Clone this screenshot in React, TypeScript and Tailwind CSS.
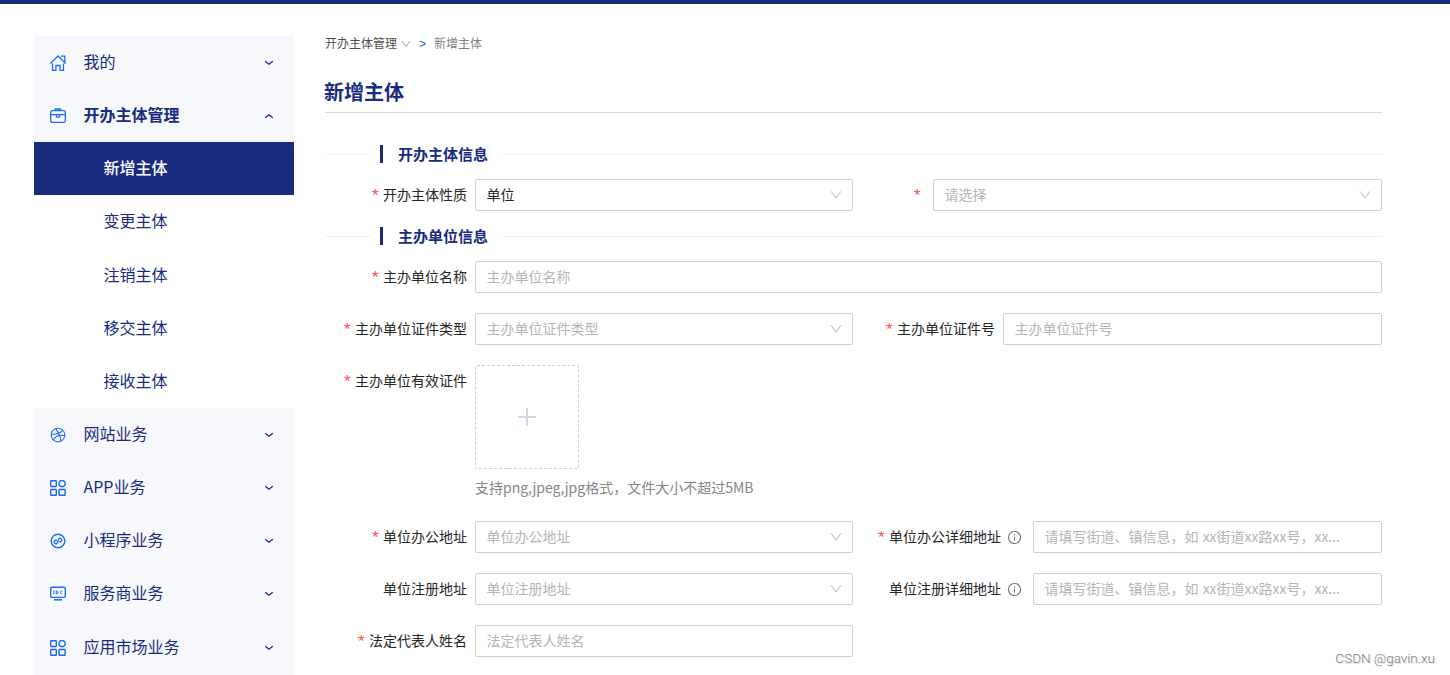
import { useState } from "react";
import type { ReactNode } from "react";
import { AiOutlineDribbble, AiOutlineInfoCircle } from "react-icons/ai";

const IconHome = () => (
  <svg width="16" height="16" viewBox="0 0 16 16" fill="none" stroke="currentColor" strokeWidth="1.3">
    <path d="M0.4 8.6L8 1l7.6 7.6" />
    <path d="M10.8 1.2h4v6.2" />
    <path d="M2.5 8.4v7h3.4v-4.9h4.2v4.9h3.4v-7" />
  </svg>
);

const IconBriefcase = () => (
  <svg width="16" height="16" viewBox="0 0 16 16" fill="none" stroke="currentColor" strokeWidth="1.3">
    <rect x="0.7" y="2.6" width="14.6" height="11.8" rx="1.6" />
    <path d="M5.4 2.6V0.9h5.2v1.7" strokeWidth="1.5" />
    <path d="M0.6 6.7h14.8M6.3 6.9v.8a1.7 1.7 0 0 0 3.4 0v-.8" />
  </svg>
);

const IconGrid = () => (
  <svg width="16" height="16" viewBox="0 0 16 16" fill="none" stroke="currentColor" strokeWidth="1.4">
    <rect x="0.7" y="0.7" width="5.6" height="5.8" rx="0.4" />
    <circle cx="12.1" cy="3.6" r="3.1" />
    <rect x="0.7" y="9.5" width="5.6" height="5.8" rx="0.4" />
    <rect x="9.1" y="9.5" width="6" height="5.8" rx="0.4" />
  </svg>
);

const IconMiniProgram = () => (
  <svg width="16" height="16" viewBox="0 0 16 16" fill="none" stroke="currentColor" strokeWidth="1.4">
    <circle cx="8" cy="8" r="6.8" />
    <path
      d="M6.3 7.9A1.7 1.7 0 1 0 8 9.7V6.3a1.7 1.7 0 1 1 1.7 1.8"
      transform="rotate(18 8 8)"
      strokeLinecap="round"
    />
  </svg>
);

const IconIdc = () => (
  <svg width="16" height="16" viewBox="0 0 16 16" fill="none" stroke="currentColor" strokeWidth="1.4">
    <rect x="0.7" y="1.2" width="14.6" height="10.2" rx="1.4" />
    <path d="M4 13.8h8" strokeWidth="1.5" />
    <path d="M3.9 4.5v3.7M6.2 5v2.8h.7c1.6 0 1.6-2.8 0-2.8zM12.3 5.2c-2.5-.9-2.5 3.3 0 2.5" strokeWidth="1" />
  </svg>
);

const MENU: { label: string; icon: ReactNode; children?: string[] }[] = [
  { label: "我的", icon: <IconHome /> },
  {
    label: "开办主体管理",
    icon: <IconBriefcase />,
    children: ["新增主体", "变更主体", "注销主体", "移交主体", "接收主体"],
  },
  { label: "网站业务", icon: <AiOutlineDribbble size={18} className="-m-px" /> },
  { label: "APP业务", icon: <IconGrid /> },
  { label: "小程序业务", icon: <IconMiniProgram /> },
  { label: "服务商业务", icon: <IconIdc /> },
  { label: "应用市场业务", icon: <IconGrid /> },
];

const DETAIL_HINT = "请填写街道、镇信息，如 xx街道xx路xx号，xx...";

function MenuArrow({ open }: { open: boolean }) {
  return (
    <svg
      width="10"
      height="6"
      viewBox="0 0 10 6"
      fill="none"
      stroke="currentColor"
      strokeWidth="1.4"
      className={open ? "rotate-180" : ""}
    >
      <path d="M1.2 1.3L5 4.2l3.8-2.9" />
    </svg>
  );
}

function ChevronDown({ className }: { className: string }) {
  return (
    <svg viewBox="0 0 12 12" fill="none" stroke="currentColor" className={className}>
      <path d="M1.1 2.4L6 9l4.9-6.6" />
    </svg>
  );
}

function Sidebar() {
  const [active, setActive] = useState("新增主体");

  return (
    <nav className="w-[260px] shrink-0 bg-[#f7f8fc] pb-4 text-base text-[#182b7d]">
      {MENU.map((item) => (
        <div key={item.label}>
          <button
            type="button"
            className={`flex h-[53.15px] w-full items-center pr-5 pl-4 ${item.children ? "font-bold" : ""}`}
          >
            <span className="mt-px mr-[17.5px] text-[#1f6bf0]">{item.icon}</span>
            <span className="pb-[3px]">{item.label}</span>
            <span className="mt-px ml-auto">
              <MenuArrow open={!!item.children} />
            </span>
          </button>
          {item.children?.map((child) => (
            <button
              key={child}
              type="button"
              onClick={() => setActive(child)}
              className={`flex h-[53.15px] w-full items-center pb-[3px] pl-[69.5px] ${
                active === child ? "bg-[#182b7d] font-medium text-white" : "bg-white"
              }`}
            >
              {child}
            </button>
          ))}
        </div>
      ))}
    </nav>
  );
}

function SectionTitle({ children }: { children: ReactNode }) {
  return (
    <div className="flex h-[18px] items-center text-[15px] font-bold text-[#182b7d]">
      <span className="h-px w-[46px] bg-[#f0f0f0]" />
      <span className="ml-[9px] h-[18px] w-[3px] bg-[#182b7d]" />
      <span className="ml-[15px]">{children}</span>
      <span className="ml-[15px] h-px flex-1 bg-[#f0f0f0]" />
    </div>
  );
}

interface FieldProps {
  label?: string;
  required?: boolean;
  info?: boolean;
  labelClass: string;
  children: ReactNode;
}

function Field({ label, required, info, labelClass, children }: FieldProps) {
  return (
    <div className="flex min-w-0">
      <div className={`flex h-8 shrink-0 items-center justify-end whitespace-nowrap text-[#262626] ${labelClass}`}>
        {required && (
          <span className="mt-0.5 mr-1 w-[7px] font-['Liberation_Sans',sans-serif] text-[17px] text-[#ff4d4f]">*</span>
        )}
        <span className="pb-0.5">{label}</span>
        {info && <AiOutlineInfoCircle size={15} className="mr-[3px] ml-1.5 text-[#777]" />}
      </div>
      <div className="min-w-0 flex-1">{children}</div>
    </div>
  );
}

function Control({ value, placeholder, select }: { value?: string; placeholder?: string; select?: boolean }) {
  return (
    <div className="flex h-8 items-center justify-between rounded-[2px] border border-[#d0d0d0] pr-2.5 pl-[10.5px] [word-spacing:1px]">
      <span className={`pb-0.5 ${value ? "text-[#262626]" : "text-[#b5b5b5]"}`}>{value ?? placeholder}</span>
      {select && <ChevronDown className="size-3 text-[#b5b5b5]" />}
    </div>
  );
}

export default function App() {
  return (
    <div className="relative h-[675px] overflow-hidden border-t-4 border-[#182b7d] bg-white font-['Noto_Sans_CJK_SC',sans-serif] text-sm">
      <div className="flex gap-[31px] pt-8 pr-[68px] pl-[34px]">
        <Sidebar />

        <main className="min-w-0 flex-1">
          {/* 面包屑 */}
          <div className="-mt-px flex h-4 items-center text-xs text-[#4d4d4d]">
            开办主体管理
            <ChevronDown className="mt-px ml-1 size-2.5 text-[#8c8c8c]" />
            <span className="mx-2 mt-0.5 font-['Liberation_Sans',sans-serif] text-[#2f54c8]">&gt;</span>
            <span className="text-[#7f7f7f]">新增主体</span>
          </div>

          <h1 className="mt-[26px] flex h-9 items-start border-b border-[#d9d9d9] text-xl leading-[30px] font-bold text-[#182b7d]">
            <span className="-ml-px">新增主体</span>
          </h1>

          <div className="mt-8">
            <SectionTitle>开办主体信息</SectionTitle>
            <div className="my-4 grid grid-cols-[528px_529px]">
              <Field label="开办主体性质" required labelClass="w-[150px] pr-2">
                <Control value="单位" select />
              </Field>
              <Field required labelClass="w-20 pr-2">
                <Control placeholder="请选择" select />
              </Field>
            </div>

            <SectionTitle>主办单位信息</SectionTitle>
            <div className="mt-4 grid grid-cols-[528px_529px] gap-y-5">
              <div className="col-span-2">
                <Field label="主办单位名称" required labelClass="w-[150px] pr-2">
                  <Control placeholder="主办单位名称" />
                </Field>
              </div>

              <Field label="主办单位证件类型" required labelClass="w-[150px] pr-2">
                <Control placeholder="主办单位证件类型" select />
              </Field>
              <Field label="主办单位证件号" required labelClass="w-[150px] pr-2">
                <Control placeholder="主办单位证件号" />
              </Field>

              <div className="col-span-2 h-[136px]">
                <Field label="主办单位有效证件" required labelClass="w-[150px] pr-2">
                  <div className="flex h-26 w-26 items-center justify-center rounded-[2px] border border-dashed border-[#cfcfcf]">
                    <svg width="18" height="18" viewBox="0 0 18 18" stroke="#d3d8e8" strokeWidth="2">
                      <path d="M9 0v18M0 9h18" />
                    </svg>
                  </div>
                  <p className="mt-[7px] leading-[22px] text-[#858585]">
                    支持png,jpeg,jpg格式，文件大小不超过5MB
                  </p>
                </Field>
              </div>

              <Field label="单位办公地址" required labelClass="w-[150px] pr-2">
                <Control placeholder="单位办公地址" select />
              </Field>
              <Field label="单位办公详细地址" required info labelClass="w-[180px] pr-2">
                <Control placeholder={DETAIL_HINT} />
              </Field>

              <Field label="单位注册地址" labelClass="w-[150px] pr-2">
                <Control placeholder="单位注册地址" select />
              </Field>
              <Field label="单位注册详细地址" info labelClass="w-[180px] pr-2">
                <Control placeholder={DETAIL_HINT} />
              </Field>

              <Field label="法定代表人姓名" required labelClass="w-[150px] pr-2">
                <Control placeholder="法定代表人姓名" />
              </Field>
            </div>
          </div>
        </main>
      </div>

      <span className="absolute right-[15px] bottom-[7px] font-['Roboto',sans-serif] text-[13.5px] font-light text-[#808080] [text-shadow:1px_1px_0_#e5e5e5]">
        CSDN @gavin.xu
      </span>
    </div>
  );
}
